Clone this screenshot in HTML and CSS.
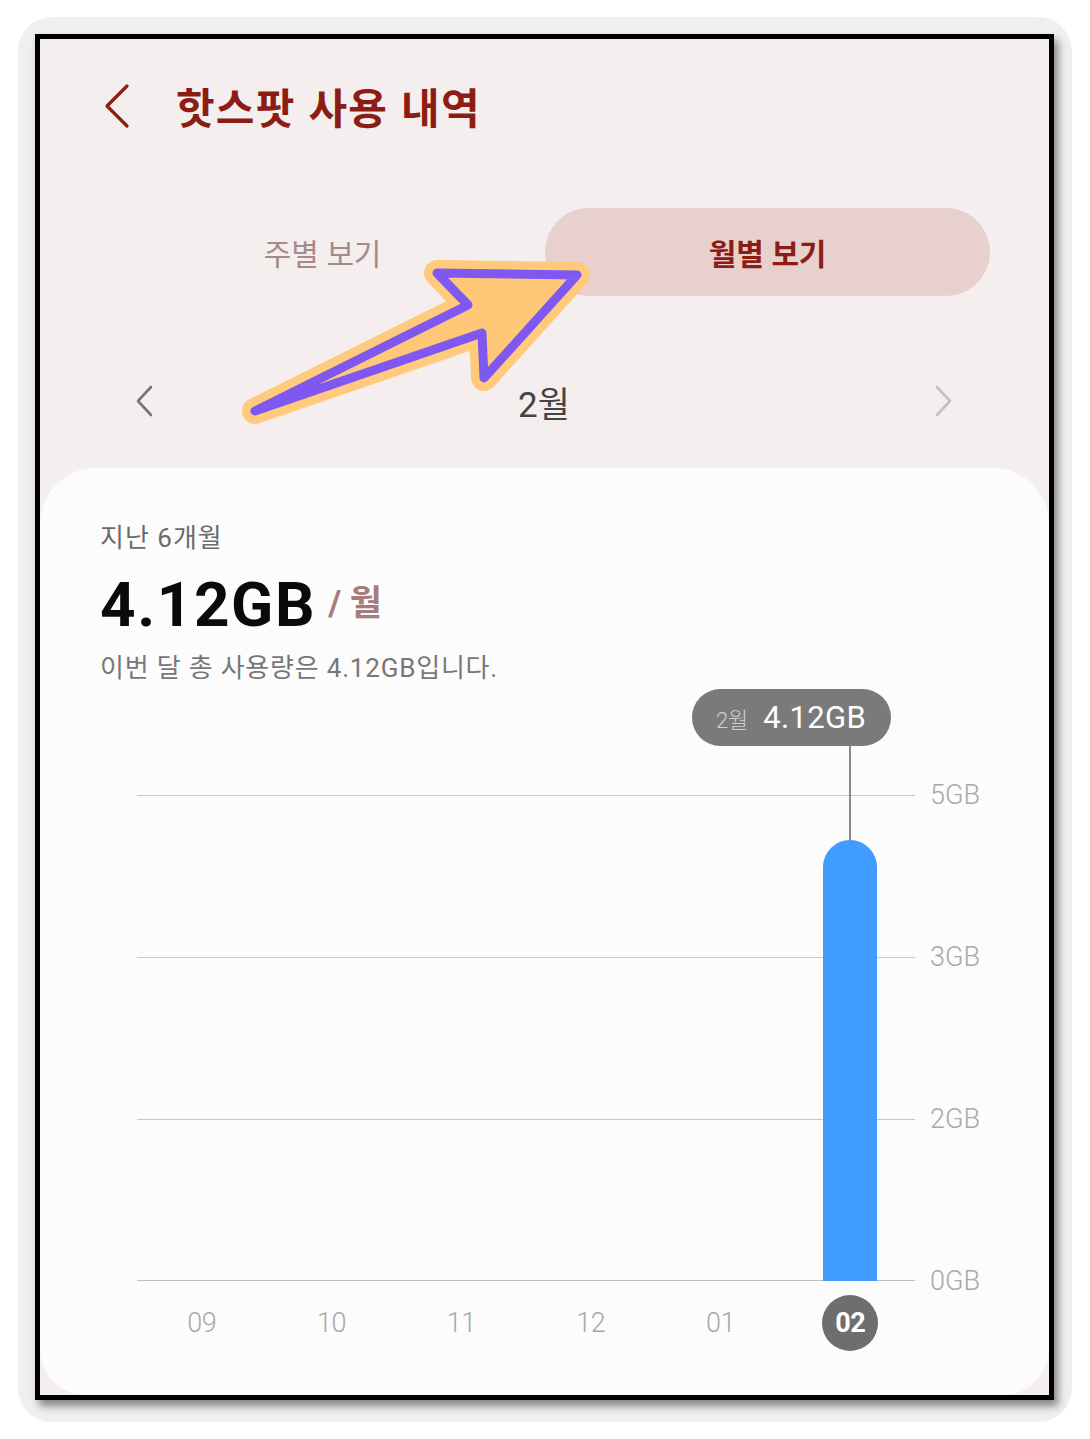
FILE: index.html
```html
<!DOCTYPE html>
<html lang="ko">
<head>
<meta charset="utf-8">
<title>핫스팟 사용 내역</title>
<link rel="stylesheet" href="styles.css">
</head>
<body>
<div class="outer">
  <div class="phone">
    <div class="screen">
      <header class="header">
        <svg class="back" width="30" height="46" viewBox="0 0 30 46"><path d="M25 3 L5 23 L25 43" fill="none" stroke="#8c1d12" stroke-width="3.2" stroke-linecap="round" stroke-linejoin="round"/></svg>
        <h1 class="title">핫스팟 사용 내역</h1>
      </header>

      <div class="tabs">
        <div class="tab">주별 보기</div>
        <div class="tab tab-active">월별 보기</div>
      </div>

      <div class="monthnav">
        <svg class="nav-arrow" width="20" height="32" viewBox="0 0 20 32"><path d="M16 2 L3 16 L16 30" fill="none" stroke="#7a7474" stroke-width="2.6" stroke-linecap="round" stroke-linejoin="round"/></svg>
        <div class="month">2월</div>
        <svg class="nav-arrow" width="20" height="32" viewBox="0 0 20 32"><path d="M4 2 L17 16 L4 30" fill="none" stroke="#c4c0c0" stroke-width="2.6" stroke-linecap="round" stroke-linejoin="round"/></svg>
      </div>

      <section class="card">
        <div class="period">지난 6개월</div>
        <div class="amount"><span class="amount-num">4.12GB</span><span class="amount-unit">/ 월</span></div>
        <div class="desc">이번 달 총 사용량은 4.12GB입니다.</div>

        <div class="chart">
          <div class="chart-row">
            <div class="plot">
              <div class="col"></div>
              <div class="col"></div>
              <div class="col"></div>
              <div class="col"></div>
              <div class="col"></div>
              <div class="col">
                <div class="tooltip"><span class="tip-month">2월</span><span class="tip-val">4.12GB</span></div>
                <div class="stem"></div>
                <div class="bar" style="height:441px"></div>
              </div>
            </div>
            <div class="yaxis">
              <div class="ylabel">5GB</div>
              <div class="ylabel">3GB</div>
              <div class="ylabel">2GB</div>
              <div class="ylabel">0GB</div>
            </div>
          </div>
          <div class="xaxis">
            <div class="xlabel">09</div>
            <div class="xlabel">10</div>
            <div class="xlabel">11</div>
            <div class="xlabel">12</div>
            <div class="xlabel">01</div>
            <div class="xlabel"><span class="xsel">02</span></div>
          </div>
        </div>
      </section>
    </div>
  </div>
</div>

<svg class="annot" width="1090" height="500" viewBox="0 0 1090 500">
  <polygon points="255,411 468,305 437,273 577,275 484,378 482,333" fill="#ffca7c" stroke="#ffca7c" stroke-width="26" stroke-linejoin="round"/>
  <polygon points="255,411 468,305 437,273 577,275 484,378 482,333" fill="#ffc878" stroke="#7f58f2" stroke-width="9" stroke-linejoin="round"/>
</svg>
</body>
</html>
```

FILE: styles.css
```css
html, body {
  margin: 0;
  padding: 0;
}
body {
  position: relative;
  width: 1090px;
  height: 1439px;
  background: #ffffff;
  font-family: Roboto, "Noto Sans CJK KR", sans-serif;
  overflow: hidden;
}
.outer {
  margin: 17px 18px 0 18px;
  height: 1405px;
  background: #efefef;
  border-radius: 34px;
  padding: 17px 0 0 17px;
  box-sizing: border-box;
}
.phone {
  width: 1019px;
  height: 1366px;
  border: 5px solid #000;
  box-sizing: border-box;
  background: #f4eeee;
  box-shadow: 4px 6px 8px rgba(0,0,0,0.45);
}
.screen {
  height: 100%;
  display: flex;
  flex-direction: column;
}
.header {
  display: flex;
  align-items: center;
  height: 60px;
  margin-top: 37px;
  padding-left: 62px;
}
.back {
  display: block;
}
.title {
  margin: 0 0 0 44px;
  font-family: "Noto Sans CJK KR", sans-serif;
  font-size: 42px;
  font-weight: 700;
  letter-spacing: 1.2px;
  color: #8c1d12;
  line-height: 60px;
}
.tabs {
  margin: 72px 0 0 60px;
  width: 890px;
  height: 88px;
  display: grid;
  grid-template-columns: 1fr 1fr;
}
.tab {
  display: flex;
  align-items: center;
  justify-content: center;
  font-family: "Noto Sans CJK KR", sans-serif;
  font-size: 30px;
  letter-spacing: -0.3px;
  color: #a68a8a;
  border-radius: 44px;
}
.tab-active {
  background: #e8d0cf;
  color: #8c1d12;
  font-weight: 700;
}
.monthnav {
  margin-top: 75px;
  height: 60px;
  display: flex;
  align-items: center;
  justify-content: space-between;
  padding: 0 96px 0 95px;
}
.nav-arrow {
  display: block;
}
.month {
  font-size: 35px;
  color: #444;
  letter-spacing: 0;
}
.card {
  margin-top: 37px;
  flex: 1;
  background: #fcfcfc;
  border-radius: 56px 56px 46px 46px;
  padding: 52px 0 0 60px;
}
.period {
  font-size: 26px;
  line-height: 36px;
  color: #6b6b6b;
  letter-spacing: 1px;
}
.amount {
  margin-top: 13px;
  height: 72px;
  display: flex;
  align-items: center;
}
.amount-num {
  font-size: 62px;
  font-weight: 700;
  color: #0a0a0a;
  letter-spacing: 1.6px;
  line-height: 72px;
}
.amount-unit {
  margin-left: 12px;
  font-size: 35px;
  font-weight: 700;
  color: #a67c7c;
  line-height: 40px;
  margin-top: -2px;
}
.desc {
  margin-top: 9px;
  font-size: 26px;
  line-height: 36px;
  color: #777;
  letter-spacing: 0.8px;
}
.chart {
  margin: 3px 0 0 37px;
}
.chart-row {
  display: flex;
  align-items: flex-start;
}
.plot {
  width: 778px;
  height: 592px;
  display: grid;
  grid-template-columns: repeat(6, 1fr);
  background:
    linear-gradient(#c8c8c8, #c8c8c8) 0 106px / 100% 1px no-repeat,
    linear-gradient(#c8c8c8, #c8c8c8) 0 268px / 100% 1px no-repeat,
    linear-gradient(#c8c8c8, #c8c8c8) 0 430px / 100% 1px no-repeat,
    linear-gradient(#c0c0c0, #c0c0c0) 0 591px / 100% 1.5px no-repeat;
}
.col {
  display: flex;
  flex-direction: column;
  align-items: center;
  justify-content: flex-end;
  min-width: 0;
}
.tooltip {
  flex: none;
  align-self: flex-end;
  margin-right: 24px;
  height: 57px;
  border-radius: 29px;
  background: #7a7a7a;
  display: flex;
  align-items: center;
  padding: 0 25px 0 24px;
  white-space: nowrap;
}
.tip-month {
  font-size: 22px;
  color: #cfcfcf;
  font-weight: 300;
}
.tip-val {
  margin-left: 15px;
  font-size: 31px;
  color: #fff;
  letter-spacing: 0.3px;
}
.stem {
  flex: 1;
  width: 2px;
  background: #8a8a8a;
}
.bar {
  flex: none;
  width: 54px;
  background: #409cff;
  border-radius: 27px 27px 0 0;
}
.yaxis {
  margin-left: 15px;
  height: 592px;
  box-sizing: border-box;
  padding-top: 90px;
  display: flex;
  flex-direction: column;
  gap: 130px;
}
.ylabel {
  flex: none;
  height: 32px;
  line-height: 32px;
  font-size: 27px;
  color: #a8a8a8;
  font-weight: 300;
}
.xaxis {
  margin-top: 14px;
  width: 778px;
  display: grid;
  grid-template-columns: repeat(6, 1fr);
}
.xlabel {
  height: 56px;
  display: flex;
  align-items: center;
  justify-content: center;
  font-size: 27px;
  color: #a8a8a8;
  font-weight: 300;
  letter-spacing: -0.5px;
}
.xsel {
  width: 56px;
  height: 56px;
  border-radius: 50%;
  background: #6e6e6e;
  color: #fff;
  font-weight: 700;
  display: flex;
  align-items: center;
  justify-content: center;
}
.annot {
  position: absolute;
  left: 0;
  top: 0;
  pointer-events: none;
}
```
